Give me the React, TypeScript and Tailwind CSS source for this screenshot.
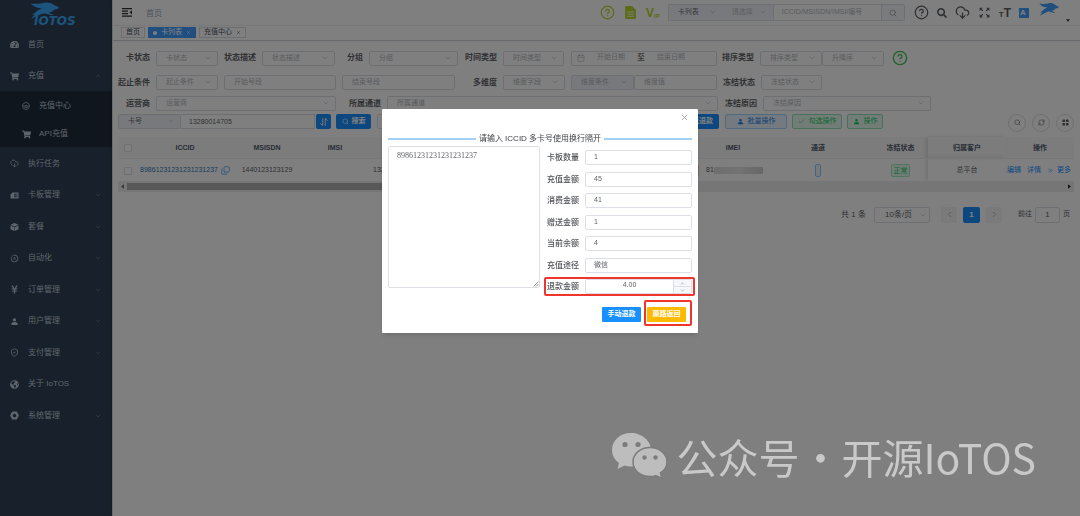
import { useState } from "react";
import type { ReactNode } from "react";
import clsx from "clsx";
import {
  Calendar,
  Check,
  ChevronDown,
  ChevronLeft,
  ChevronRight,
  ChevronUp,
  ChevronsRight,
  CircleHelp,
  CloudDownload,
  Copy,
  RefreshCw,
  Search,
  ShieldCheck,
  X,
} from "lucide-react";
import {
  FaGlobeAmericas,
  FaSearch,
  FaShoppingCart,
  FaTachometerAlt,
  FaYenSign,
} from "react-icons/fa";
import { BsGridFill, BsNutFill, BsPersonFill } from "react-icons/bs";
import { MdOutlineMotionPhotosAuto, MdZoomOutMap } from "react-icons/md";

type MenuItem = {
  label: string;
  icon: ReactNode;
  arrow?: "up" | "down";
  children?: { label: string; icon: ReactNode }[];
};

const SimIcon = () => (
  <svg viewBox="0 0 18 14" className="h-[7px] w-[9px]" fill="currentColor">
    <path d="M5 1h12v12H1V5z" />
    <path d="M9 4h5v6H9zM11 4v6" fill="none" stroke="#304156" strokeWidth="1.2" />
  </svg>
);

const BoxIcon = () => (
  <svg viewBox="0 0 18 16" className="h-2 w-[9px]" fill="currentColor">
    <path d="M9 0l8 3.500-8 3.500-8-3.500zM1 5l7.500 3.300V16L1 12.500zM17 5L9.500 8.300V16l7.500-3.500z" />
  </svg>
);

const RingIcon = () => (
  <svg viewBox="0 0 16 16" className="size-2" fill="none" stroke="currentColor" strokeWidth="1.4">
    <circle cx="8" cy="8" r="7" />
    <path d="M4 10V7l2 2 2-3 2 3 2-2v3M5 11h6" />
  </svg>
);

const menu: MenuItem[] = [
  { label: "首页", icon: <FaTachometerAlt /> },
  {
    label: "充值",
    icon: <FaShoppingCart />,
    arrow: "up",
    children: [
      { label: "充值中心", icon: <RingIcon /> },
      { label: "API充值", icon: <FaShoppingCart /> },
    ],
  },
  { label: "执行任务", icon: <CloudDownload className="size-[9px]" /> },
  { label: "卡板管理", icon: <SimIcon />, arrow: "down" },
  { label: "套餐", icon: <BoxIcon />, arrow: "down" },
  { label: "自动化", icon: <MdOutlineMotionPhotosAuto />, arrow: "down" },
  { label: "订单管理", icon: <FaYenSign />, arrow: "down" },
  { label: "用户管理", icon: <BsPersonFill />, arrow: "down" },
  { label: "支付管理", icon: <ShieldCheck className="size-[9px]" />, arrow: "down" },
  { label: "关于 IoTOS", icon: <FaGlobeAmericas /> },
  { label: "系统管理", icon: <BsNutFill />, arrow: "down" },
];

const refundFields = [
  { id: "count", label: "卡板数量", value: "1" },
  { id: "recharge", label: "充值金额", value: "45" },
  { id: "consume", label: "消费金额", value: "41" },
  { id: "gift", label: "赠送金额", value: "1" },
  { id: "balance", label: "当前余额", value: "4" },
  { id: "channel", label: "充值途径", value: "微信" },
];

const wolfPath =
  "M1 2C18 5 32 4 44 1c12-2 22 0 30 6l17 9c-2 5-8 6-13 5-6 6-12 9-20 11l16 6-6 2-20-6c-8 0-14 2-20 6L3 51l13-14-11 3 16-13c7-5 13-8 20-9C27 18 12 14 1 2Z";

function Select({
  label,
  className,
  bare,
  muted,
  dark,
}: {
  label: string;
  className: string;
  bare?: boolean;
  muted?: boolean;
  dark?: boolean;
}) {
  return (
    <div className={clsx("relative shrink-0", className)}>
      <select
        aria-label={label}
        className={clsx(
          "block h-[15px] w-full appearance-none pb-0.5 pl-[9px] text-[7px] leading-[11px] outline-none",
          bare ? "" : "rounded-xs border border-[#dcdfe6]",
          muted ? "bg-[#f0f3f8]" : "bg-white",
          dark ? "text-[#707378]" : "text-[#b4b8c0]",
        )}
      >
        <option>{label}</option>
      </select>
      <ChevronDown
        strokeWidth={1.5}
        className="pointer-events-none absolute top-[3px] right-1.5 size-2 text-[#a4a8b0]"
      />
    </div>
  );
}

function TextBox({ label, className }: { label: string; className: string }) {
  return (
    <input
      aria-label={label}
      placeholder={label}
      className={clsx(
        "h-[15px] shrink-0 rounded-xs border border-[#dcdfe6] bg-white px-[9px] pb-0.5 text-[7px] outline-none placeholder:text-[#b4b8c0]",
        className,
      )}
    />
  );
}

function Label({ children, className }: { children: ReactNode; className?: string }) {
  return (
    <span className={clsx("shrink-0 pr-1.5 text-right text-[8px] font-bold text-[#606266]", className)}>
      {children}
    </span>
  );
}

function Sidebar() {
  return (
    <aside className="w-28 shrink-0 bg-[#304156] text-[8px] text-[#bfcbd9]">
      <a href="#" aria-label="IOTOS" className="flex h-7 justify-center text-[#38a8f8]">
        <svg viewBox="0 0 52 28" className="h-7 w-[52px]" fill="currentColor">
          <path d={wolfPath} transform="translate(0 2.500) scale(0.32)" />
          <text x="4" y="25" fontFamily="DejaVu Sans" fontSize="12" fontWeight="bold" fontStyle="italic">
            IOTOS
          </text>
        </svg>
      </a>
      <nav>
        <ul>
          {menu.map((item) => (
            <li key={item.label} className="group">
              <a href="#" className="flex h-[31px] items-center px-2.5 pt-0.5 group-even:h-8">
                <span className="flex w-[18px] text-[9px]">{item.icon}</span>
                <span className="flex-1">{item.label}</span>
                {item.arrow === "up" && <ChevronUp strokeWidth={1.5} className="size-2 text-[#8390a0]" />}
                {item.arrow === "down" && <ChevronDown strokeWidth={1.5} className="size-2 text-[#8390a0]" />}
              </a>
              {item.children && (
                <ul className="bg-[#1f2d3d]">
                  {item.children.map((child) => (
                    <li key={child.label}>
                      <a href="#" className="flex h-7 items-center pt-0.5 pl-[22px]">
                        <span className="flex w-[17px] text-[9px]">{child.icon}</span>
                        {child.label}
                      </a>
                    </li>
                  ))}
                </ul>
              )}
            </li>
          ))}
        </ul>
      </nav>
    </aside>
  );
}

function Navbar() {
  return (
    <header className="flex h-[26px] items-center border-b border-[#f0f0f0] pr-[10px] pl-[9px]">
      <button aria-label="折叠菜单" className="text-[#303133]">
        <svg viewBox="0 0 20 18" className="h-[9px] w-[10px]" fill="currentColor">
          <path d="M0 0h20v2.4H0zM0 5h12v2.4H0zM0 10h12v2.4H0zM0 15h20v2.4H0zM20 4.4v8.6l-5-4.3z" />
        </svg>
      </button>
      <a href="#" className="ml-[14px] pt-0.5 text-[8px] text-[#97a8be]">
        首页
      </a>
      <div className="ml-auto flex items-center">
        <div className="mr-2 flex items-center gap-2 text-[#b8d62a]">
          <CircleHelp className="size-[15px]" />
          <svg viewBox="0 0 20 24" className="mx-0.5 h-[13px] w-[11px]" fill="currentColor">
            <path d="M2 0h11l7 7v15a2 2 0 0 1-2 2H2a2 2 0 0 1-2-2V2a2 2 0 0 1 2-2Z" />
            <path d="M4 11h12M4 15h12M4 19h12" stroke="#fff" strokeWidth="1.6" />
          </svg>
          <span className="flex items-end font-bold">
            <span className="text-[12px] leading-[12px]">V</span>
            <span className="text-[6px] leading-[6px]">IP</span>
          </span>
        </div>
        <div className="mr-[9px] flex">
          <div className="flex rounded-l-xs border border-r-0 border-[#dcdfe6]">
            <Select label="卡列表" className="w-[54px]" bare muted dark />
            <Select label="请选择" className="w-[50px]" bare muted />
          </div>
          <input
            aria-label="关键字"
            placeholder="ICCID/MSISDN/IMSI/编号"
            className="w-[109px] border border-[#dcdfe6] px-2 text-[7px] outline-none placeholder:text-[#b4b8c0]"
          />
          <button
            aria-label="查询"
            className="flex w-[23px] items-center justify-center rounded-r-xs border border-l-0 border-[#dcdfe6] bg-[#f5f7fa] text-[#909399]"
          >
            <Search className="size-2" />
          </button>
        </div>
        <div className="flex items-center gap-2 text-[#5a5e66]">
          <CircleHelp className="size-[15px]" />
          <FaSearch className="size-[10px]" />
          <CloudDownload className="size-[15px]" />
          <MdZoomOutMap className="size-[13px]" />
          <span className="flex items-baseline font-bold leading-none">
            <span className="text-[8px]">T</span>
            <span className="text-[12px]">T</span>
          </span>
          <span className="flex size-[10px] items-center bg-[#409eff] pl-px text-[8px] leading-none font-bold text-white">
            A
          </span>
          <span className="ml-0.5 flex items-end gap-[7px] text-[#409eff]">
            <svg viewBox="0 0 92 52" className="mb-1.5 h-[13px] w-5" fill="currentColor" preserveAspectRatio="none">
              <path d={wolfPath} />
            </svg>
            <svg viewBox="0 0 8 5" className="h-[3px] w-1 text-[#303133]" fill="currentColor">
              <path d="M0 0h8L4 5z" />
            </svg>
          </span>
        </div>
      </div>
    </header>
  );
}

function TagsBar() {
  return (
    <div className="flex h-[15px] items-start gap-[3px] border-b border-[#d0d3d8] pt-px pl-2 text-[7px] shadow-xs">
      <a href="#" className="flex h-[11px] items-center border border-[#d8dce5] px-1 text-[#495060]">
        首页
      </a>
      <a href="#" className="flex h-[11px] items-center gap-1 border border-[#409eff] bg-[#409eff] px-1 text-white">
        <span className="size-1 rounded-full bg-white" />
        卡列表
        <X className="size-[5px]" />
      </a>
      <a href="#" className="flex h-[11px] items-center gap-1 border border-[#d8dce5] px-1 text-[#495060]">
        充值中心
        <X className="size-[5px]" />
      </a>
    </div>
  );
}

function Filters() {
  return (
    <form>
      <div className="flex items-center">
        <Label className="w-[38px]">卡状态</Label>
        <Select label="卡状态" className="w-[62px]" />
        <Label className="w-11">状态描述</Label>
        <Select label="状态描述" className="w-[73px]" />
        <Label className="w-[34px]">分组</Label>
        <Select label="分组" className="w-[89px]" />
        <Label className="w-[45px]">时间类型</Label>
        <Select label="时间类型" className="w-[61px]" />
        <div className="ml-[7px] flex h-[15px] w-[146px] shrink-0 items-center rounded-xs border border-[#dcdfe6] pl-[5px]">
          <Calendar strokeWidth={1.5} className="size-2 text-[#a0a4ac]" />
          <input
            aria-label="开始日期"
            placeholder="开始日期"
            className="w-[52px] pb-0.5 text-center text-[7px] outline-none placeholder:text-[#b4b8c0]"
          />
          <span className="w-2 text-[8px] text-[#303133]">至</span>
          <input
            aria-label="结束日期"
            placeholder="结束日期"
            className="w-[52px] pb-0.5 text-center text-[7px] outline-none placeholder:text-[#b4b8c0]"
          />
        </div>
        <Label className="w-[43px]">排序类型</Label>
        <Select label="排序类型" className="w-[62px]" />
        <Select label="升降序" className="w-[62px]" />
        <CircleHelp className="ml-2 size-4 shrink-0 text-[#45c455]" />
      </div>
      <div className="mt-[9px] flex items-center">
        <Label className="w-[38px]">起止条件</Label>
        <Select label="起止条件" className="w-[62px]" />
        <TextBox label="开始号段" className="ml-1.5 w-[112px]" />
        <TextBox label="结束号段" className="ml-1.5 w-[113px]" />
        <Label className="w-12">多维度</Label>
        <Select label="维度字段" className="w-[62px]" />
        <Select label="维度条件" className="ml-1.5 w-[63px]" muted />
        <TextBox label="维度值" className="w-[83px]" />
        <Label className="w-11">冻结状态</Label>
        <Select label="冻结状态" className="w-[61px]" />
      </div>
      <div className="mt-1.5 flex items-center">
        <Label className="w-[38px]">运营商</Label>
        <Select label="运营商" className="w-[180px]" />
        <Label className="w-[51px]">所属通道</Label>
        <Select label="所属通道" className="w-[331px]" />
        <Label className="w-[45px]">冻结原因</Label>
        <Select label="冻结原因" className="w-[168px]" />
      </div>
    </form>
  );
}

function Toolbar() {
  return (
    <div className="mt-[3px] flex h-[15px] items-center text-[7px]">
      <Select label="卡号" className="w-[63px]" muted dark />
      <input
        aria-label="卡号"
        defaultValue="13280014705"
        className="h-[15px] w-[134px] shrink-0 border border-l-0 border-[#dcdfe6] px-2 text-[7px] text-[#606266] outline-none"
      />
      <button
        aria-label="排序"
        className="ml-px flex size-[15px] shrink-0 items-center justify-center rounded-xs bg-[#1890ff] text-white"
      >
        <svg viewBox="0 0 16 16" className="size-[10px]" fill="none" stroke="currentColor" strokeWidth="1.4">
          <path d="M6 2v12L2 10M10 14V2l4 4" />
        </svg>
      </button>
      <button className="ml-[5px] flex h-[15px] w-[35px] shrink-0 items-center justify-center gap-[3px] rounded-xs bg-[#1890ff] font-bold text-white">
        <Search className="size-[7px]" />
        搜索
      </button>
      <button className="ml-1.5 h-[15px] w-[35px] shrink-0 rounded-xs border border-[#dcdfe6] text-[#606266]">重置</button>
      <button className="ml-auto h-[15px] w-[62px] shrink-0 rounded-xs bg-[#1890ff] pr-1.5 text-right font-bold text-white">
        批返退款
      </button>
      <button className="ml-1.5 flex h-[15px] w-[62px] shrink-0 items-center justify-center gap-1 rounded-xs border border-[#a3d3ff] bg-[#e8f4ff] text-[#1c7fe8]">
        <BsPersonFill className="size-[7px]" />
        批量操作
      </button>
      <button className="ml-[5px] flex h-[15px] w-[50px] shrink-0 items-center justify-center gap-1 rounded-xs border border-[#8fe3b5] bg-[#e7faf0] text-[#13ce66]">
        <Check className="size-[7px]" />
        勾选操作
      </button>
      <button className="ml-[5px] flex h-[15px] w-9 shrink-0 items-center justify-center gap-1 rounded-xs border border-[#8fe3b5] bg-[#e7faf0] text-[#13ce66]">
        <BsPersonFill className="size-[7px]" />
        操作
      </button>
      <div className="ml-[125px] flex gap-1.5 pt-0.5 text-[#606266]">
        <button aria-label="搜索" className="flex size-[18px] items-center justify-center rounded-full border border-[#dcdfe6]">
          <Search className="size-[7px]" />
        </button>
        <button aria-label="刷新" className="flex size-[18px] items-center justify-center rounded-full border border-[#dcdfe6]">
          <RefreshCw className="size-[7px]" />
        </button>
        <button aria-label="列" className="flex size-[18px] items-center justify-center rounded-full border border-[#dcdfe6]">
          <BsGridFill className="size-[7px]" />
        </button>
      </div>
    </div>
  );
}

function CardTable() {
  return (
    <div className="mt-2">
      <table className="w-full table-fixed text-center text-[7px] text-[#606266]">
        <colgroup>
          <col className="w-5" />
          <col className="w-[94px]" />
          <col className="w-[70px]" />
          <col className="w-[66px]" />
          <col />
          <col className="w-[60px]" />
          <col className="w-[110px]" />
          <col className="w-[55px]" />
          <col className="w-[78px]" />
          <col className="w-[68px]" />
        </colgroup>
        <thead>
          <tr className="h-[21px] border-b border-[#ebeef5] bg-[#f8f8f9] text-[#515a6e] [&>th]:pt-0.5">
            <th>
              <input
                type="checkbox"
                aria-label="全选"
                className="mx-auto block size-2 appearance-none rounded-[1px] border border-[#dcdfe6] bg-white"
              />
            </th>
            <th>ICCID</th>
            <th>MSISDN</th>
            <th>IMSI</th>
            <th />
            <th>IMEI</th>
            <th>通道</th>
            <th>冻结状态</th>
            <th className="shadow-[-2px_0_4px_rgba(0,0,0,0.12)]">归属客户</th>
            <th>操作</th>
          </tr>
        </thead>
        <tbody>
          <tr className="h-[23px] border-b border-[#ebeef5] [&>td]:pt-0.5">
            <td>
              <input
                type="checkbox"
                aria-label="选择"
                className="mx-auto block size-2 appearance-none rounded-[1px] border border-[#dcdfe6] bg-white"
              />
            </td>
            <td>
              <a href="#" className="flex items-center justify-center gap-[3px] text-[#337ab7]">
                89861231231231231237
                <Copy className="size-[9px] -scale-y-100 text-[#409eff]" />
              </a>
            </td>
            <td>1440123123129</td>
            <td />
            <td>
              <div className="flex items-center justify-between pr-1 pl-[5px]">
                13280014705
                <span className="h-[13px] w-6 rounded-xs border border-[#ffbdbd] bg-[#ffeded]" />
              </div>
            </td>
            <td>
              <div className="flex items-center pl-[3px]">
                81
                <span className="h-[7px] flex-1 bg-linear-to-r from-[#dcdcdc] via-[#e6e6e6] to-[#cfcfcf]" />
              </div>
            </td>
            <td>
              <span className="mx-auto block h-[13px] w-1.5 rounded-xs border border-[#8cc5ff] bg-[#ecf5ff]" />
            </td>
            <td>
              <span className="mx-auto block h-[13px] w-[19px] rounded-xs border border-[#9fe8c0] bg-[#e7faf0] leading-[11px] text-[#13ce66]">
                正常
              </span>
            </td>
            <td className="shadow-[-2px_0_4px_rgba(0,0,0,0.12)]">总平台</td>
            <td>
              <div className="flex items-center justify-end gap-1.5 pr-[3px] text-[#1890ff]">
                <a href="#">编辑</a>
                <a href="#">详情</a>
                <a href="#" className="flex items-center gap-[3px]">
                  <ChevronsRight className="size-[7px]" />
                  更多
                </a>
              </div>
            </td>
          </tr>
        </tbody>
      </table>
      <div className="flex h-[10px] items-center bg-[#ececec] px-[3px]">
        <svg viewBox="0 0 4 6" className="h-[5px] w-[3px]" fill="#707070">
          <path d="M4 0v6L0 3z" />
        </svg>
        <span className="ml-[3px] h-[7px] w-[460px] bg-[#b0b0b0]" />
        <svg viewBox="0 0 4 6" className="ml-auto h-[5px] w-[3px]" fill="#303030">
          <path d="M0 0v6l4-3z" />
        </svg>
      </div>
    </div>
  );
}

function Pagination() {
  return (
    <div className="mt-[15px] flex h-4 items-center justify-end pr-1 text-[7px] text-[#606266]">
      <span className="text-[8px]">共 1 条</span>
      <div className="relative ml-2 w-14">
        <select
          aria-label="每页条数"
          className="block h-4 w-full appearance-none rounded-xs border border-[#dcdfe6] pl-[10px] text-[8px] leading-[14px]"
        >
          <option>10条/页</option>
        </select>
        <ChevronDown strokeWidth={1.5} className="pointer-events-none absolute top-1 right-[3px] size-2 text-[#a4a8b0]" />
      </div>
      <div className="ml-[11px] flex gap-1.5">
        <button aria-label="上一页" className="flex size-4 items-center justify-center rounded-xs bg-[#f4f4f5] text-[#a0a4ac]">
          <ChevronLeft className="size-[9px]" />
        </button>
        <button className="h-4 w-[17px] rounded-xs bg-[#1890ff] text-[8px] font-bold text-white">1</button>
        <button aria-label="下一页" className="flex size-4 items-center justify-center rounded-xs bg-[#f4f4f5] text-[#a0a4ac]">
          <ChevronRight className="size-[9px]" />
        </button>
      </div>
      <label className="ml-4 flex items-center gap-[3px]">
        前往
        <input
          aria-label="页码"
          defaultValue="1"
          className="h-4 w-[25px] rounded-xs border border-[#dcdfe6] text-center text-[8px]"
        />
        页
      </label>
    </div>
  );
}

function RefundDialog() {
  const [amount, setAmount] = useState(4);

  return (
    <div
      role="dialog"
      aria-label="退款"
      className="relative w-[316px] self-start rounded-[1px] bg-white px-1.5 pt-1 pb-[11px] text-[#606266] shadow-md"
    >
      <div className="flex justify-end pr-[3px]">
        <button aria-label="关闭" className="text-[#909399]">
          <X strokeWidth={2} className="block size-[9px]" />
        </button>
      </div>
      <div className="mt-[11px] flex h-3 items-center gap-[3px] text-[8px] text-[#404246]">
        <span className="mb-px h-0.5 flex-1 bg-[#a3d0f5]" />
        请输入 ICCID 多卡号使用换行隔开
        <span className="mb-px h-0.5 flex-1 bg-[#a3d0f5]" />
      </div>
      <div className="mt-px flex items-start gap-[7px]">
        <div className="relative">
          <textarea
            aria-label="ICCID"
            defaultValue="89861231231231231237"
            className="block h-[142px] w-[152px] resize-none rounded-xs border border-[#dcdfe6] px-2 py-1 font-['Liberation_Serif','Noto_Sans_CJK_SC',serif] text-[8px] leading-[10px] text-[#606266] outline-none"
          />
          <svg viewBox="0 0 6 6" className="absolute right-px bottom-px size-1.5" stroke="#707070" strokeWidth="0.7">
            <path d="M0.500 5.500l5-5M3 5.500L5.500 3" />
          </svg>
        </div>
        <div className="flex-1 pt-px">
          {refundFields.map((field) => (
            <div key={field.id} className="flex h-[21px] items-center even:h-[22px]">
              <label htmlFor={field.id} className="w-[38px] pt-px text-[8px] font-medium text-[#505256]">
                {field.label}
              </label>
              <input
                id={field.id}
                defaultValue={field.value}
                className="h-[15px] w-[107px] rounded-xs border border-[#dcdfe6] px-2 pb-0.5 text-[7px] outline-none"
              />
            </div>
          ))}
          <div className="relative flex h-[21px] items-center">
            <label htmlFor="refund" className="w-[38px] pt-px text-[8px] font-medium text-[#505256]">
              退款金额
            </label>
            <div className="flex h-[15px] w-[107px] rounded-xs border border-[#dcdfe6]">
              <input
                id="refund"
                value={amount.toFixed(2)}
                onChange={(e) => setAmount(Number(e.target.value) || 0)}
                className="w-[87px] pb-0.5 text-center text-[7px] outline-none"
              />
              <div className="flex flex-1 flex-col divide-y divide-[#dcdfe6] border-l border-[#dcdfe6] bg-[#f5f7fa]">
                <button aria-label="增加" onClick={() => setAmount(amount + 1)} className="flex flex-1 items-center justify-center">
                  <ChevronUp className="size-[5px]" />
                </button>
                <button aria-label="减少" onClick={() => setAmount(amount - 1)} className="flex flex-1 items-center justify-center">
                  <ChevronDown className="size-[5px]" />
                </button>
              </div>
            </div>
            <span className="pointer-events-none absolute -inset-x-[3px] inset-y-px rounded-xs border-2 border-[#f0352c]" />
          </div>
        </div>
      </div>
      <div className="mt-[10px] flex justify-end gap-1.5 pr-1.5 text-[7px] font-bold text-white">
        <button className="h-[15px] w-[39px] rounded-[1px] bg-[#1890ff]">手动退款</button>
        <div className="relative">
          <button className="block h-[15px] w-[39px] rounded-[1px] bg-[#ffba00]">原路返回</button>
          <span className="pointer-events-none absolute -top-[7px] -right-1.5 -bottom-1 -left-[3px] rounded-xs border-2 border-[#f0352c]" />
        </div>
      </div>
    </div>
  );
}

function Watermark() {
  return (
    <div className="pointer-events-none fixed right-11 bottom-9 flex items-center gap-[9px] text-[#c9c9c9]">
      <svg viewBox="0 0 56 48" className="h-12 w-14" fill="#bdbdbd">
        <path d="M20 1C9 1 1 8.500 1 18c0 5.500 2.800 10 7 13l-1.500 6 7-3.500c2 .6 4.300 1 6.500 1 11 0 20-7.500 20-16.500S31 1 20 1Z" />
        <circle cx="14" cy="12.500" r="2.600" fill="#7c7c7c" />
        <circle cx="27" cy="12.500" r="2.600" fill="#7c7c7c" />
        <path
          d="M39 15.500c-9.500 0-17 6.300-17 14.500s7.500 14.500 17 14.500c2 0 4-.3 5.800-.9L51 46.500l-1.500-5.500c4-2.600 6.500-6.500 6.500-11 0-8.200-7.500-14.500-17-14.500Z"
          stroke="#7c7c7c"
          strokeWidth="1.500"
        />
        <circle cx="33.500" cy="25.500" r="2.200" fill="#7c7c7c" />
        <circle cx="44.500" cy="25.500" r="2.200" fill="#7c7c7c" />
      </svg>
      <p className="flex font-['Noto_Sans_CJK_SC',sans-serif] text-[41px] leading-[48px]">
        <span>公众号</span>
        <span className="w-[42px] text-center">·</span>
        <span>开源IoTOS</span>
      </p>
    </div>
  );
}

export default function App() {
  return (
    <div className="flex min-h-screen overflow-hidden bg-white font-['Liberation_Sans','Noto_Sans_CJK_SC',sans-serif] leading-normal">
      <Sidebar />
      <div className="min-w-0 flex-1 border-l border-[#d5d8dd] shadow-[0_0_4px_rgba(0,0,0,0.3)]">
        <Navbar />
        <TagsBar />
        <main className="pt-[9px] pr-1.5 pl-[5px]">
          <Filters />
          <Toolbar />
          <CardTable />
          <Pagination />
        </main>
      </div>
      <div className="fixed inset-0 flex justify-center bg-black/50 pt-[109px]">
        <RefundDialog />
      </div>
      <Watermark />
    </div>
  );
}
